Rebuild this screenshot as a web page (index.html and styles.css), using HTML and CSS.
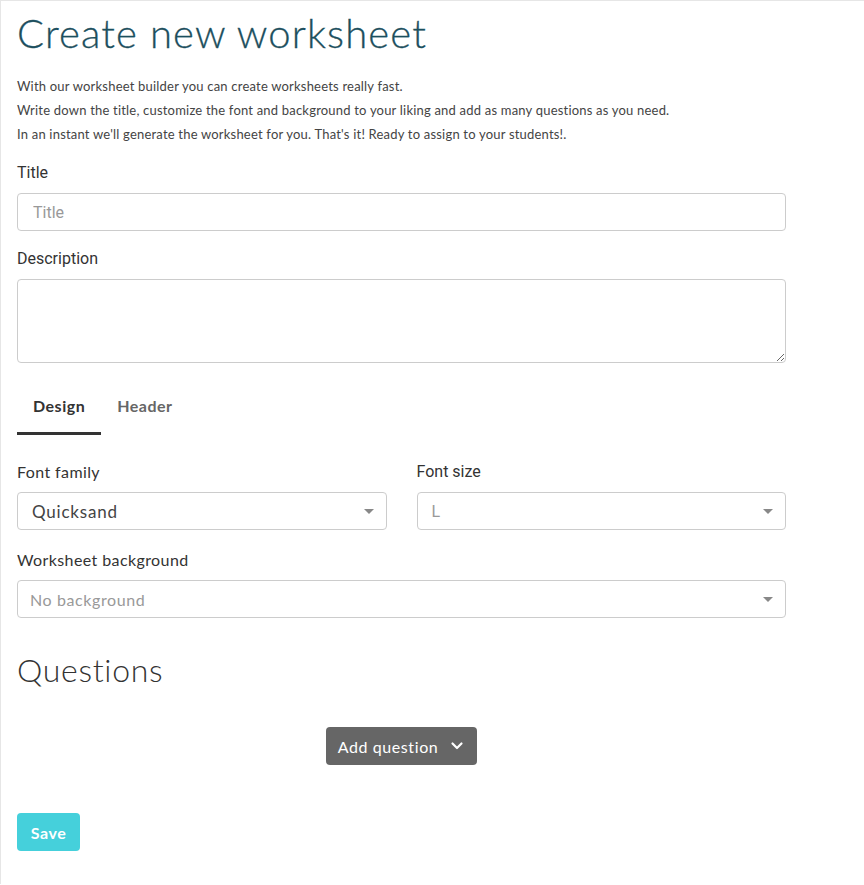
FILE: index.html
```html
<!DOCTYPE html>
<html lang="en">
<head>
    <meta charset="utf-8">
    <meta name="viewport" content="width=device-width, initial-scale=1.0">
    <title>Create new worksheet</title>
    <link rel="stylesheet" href="styles.css">
</head>
<body>
<div class="page">
    <h1 class="page-title">Create new worksheet</h1>
    <div class="intro">
        <p>With our worksheet builder you can create worksheets really fast.</p>
        <p>Write down the title, customize the font and background to your liking and add as many questions as you need.</p>
        <p>In an instant we'll generate the worksheet for you. That's it! Ready to assign to your students!.</p>
    </div>

    <form class="ws-form">
        <div class="form-group">
            <label class="lbl lbl-alt">Title</label>
            <input type="text" class="form-control ctl-alt" placeholder="Title">
        </div>
        <div class="form-group">
            <label class="lbl lbl-alt">Description</label>
            <textarea class="form-control form-area"></textarea>
        </div>

        <ul class="tabs">
            <li class="tab active">Design</li>
            <li class="tab">Header</li>
        </ul>

        <div class="row">
            <div class="col">
                <label class="lbl">Font family</label>
                <div class="select-box">
                    <span class="select-val">Quicksand</span>
                    <span class="caret"></span>
                </div>
            </div>
            <div class="col">
                <label class="lbl lbl-alt">Font size</label>
                <div class="select-box">
                    <span class="select-val muted ctl-alt">L</span>
                    <span class="caret"></span>
                </div>
            </div>
        </div>
        <div class="form-group bg-group">
            <label class="lbl">Worksheet background</label>
            <div class="select-box">
                <span class="select-val muted small">No background</span>
                <span class="caret"></span>
            </div>
        </div>

        <h2 class="section-title">Questions</h2>

        <div class="add-wrap">
            <button type="button" class="btn btn-dark">Add question
                <svg class="chev" width="14" height="14" viewBox="0 0 14 14"><path d="M2.5 4.5 L7 9 L11.5 4.5" fill="none" stroke="#fff" stroke-width="2.2" stroke-linecap="round" stroke-linejoin="round"/></svg>
            </button>
        </div>

        <button type="button" class="btn btn-save">Save</button>
    </form>
</div>
</body>
</html>
```

FILE: styles.css
```css
html{margin: 0; padding: 0;}
body{margin: 0; padding: 0; background: #fff; border-top: 1px solid #e6e6e6; border-left: 1px solid #e6e6e6; min-height: 884px; box-sizing: border-box; font-family: "Lato", "Open Sans", sans-serif; color: #444; letter-spacing: 0.4px;}
.page{width: 769px; padding: 0 0 0 16px;}
.page-title{margin: 8px 0 0 0; font-size: 40px; line-height: 48px; font-weight: 300; color: #1c4f5e; letter-spacing: 1.1px; -webkit-text-stroke: 0.3px #1c4f5e;}
.intro{margin-top: 17px;}
.intro p{margin: 0; font-size: 13px; line-height: 24px; color: #444; letter-spacing: 0.2px;}

.ws-form{margin-top: 15px;}
.form-group{margin-bottom: 16px;}
.lbl{display: block; font-size: 16px; line-height: 24px; color: #333; margin-bottom: 8px;}
.lbl-alt, .ctl-alt{font-family: "Roboto", "Liberation Sans", sans-serif; letter-spacing: 0;}
.form-control{display: block; box-sizing: border-box; width: 100%; height: 38px; padding: 6px 15px; border: 1px solid #ccc; border-radius: 4px; font-size: 16px; color: #444; background: #fff; outline: none;}
.form-control::placeholder{color: #999;}
.form-area{height: 84px; resize: vertical;}

.tabs{display: flex; list-style: none; margin: 19px 0 0 0; padding: 0;}
.tab{padding: 12px 16px 14px; font-size: 16px; line-height: 24px; font-weight: 700; color: #666; border-bottom: 3px solid transparent; letter-spacing: 0.5px;}
.tab.active{color: #333; border-bottom-color: #333;}

.row{display: flex; gap: 30px; margin-top: 25px; margin-bottom: 18px;}
.col{flex: 1;}
.select-box{position: relative; box-sizing: border-box; height: 38px; border: 1px solid #ccc; border-radius: 4px; padding: 0 14px; display: flex; align-items: center;}
.select-val{font-size: 17px; color: #444; letter-spacing: 0.8px;}
.select-val.muted{color: #999; font-size: 16px; letter-spacing: 0.6px;}
.select-val.ctl-alt{letter-spacing: 0;}
.select-val.small{margin-left: -2px;}
.caret{position: absolute; right: 12px; top: 16px; width: 0; height: 0; border-left: 5px solid transparent; border-right: 5px solid transparent; border-top: 5px solid #888;}

.section-title{margin: 33px 0 0 0; font-size: 32px; line-height: 38px; font-weight: 300; color: #333; letter-spacing: 0.7px;}

.add-wrap{display: flex; justify-content: center; margin-top: 38px;}
.btn{font-family: "Lato", "Open Sans", sans-serif; font-size: 16px; border: 0; border-radius: 4px; color: #fff; height: 38px; cursor: pointer; letter-spacing: 0.6px;}
.btn-dark{background: #666; padding: 0 13px 0 12px; display: flex; align-items: center; gap: 12px; font-weight: 400;}
.btn-save{display: block; margin-top: 48px; background: #45d0db; width: 63px; padding: 0; font-weight: 700;}
```
